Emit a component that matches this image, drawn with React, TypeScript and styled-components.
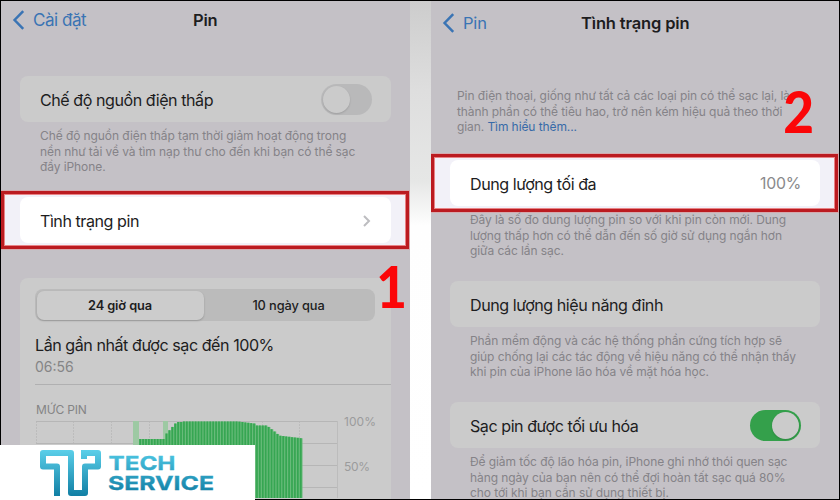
import React from "react";
import styled, { createGlobalStyle } from "styled-components";

const Global = createGlobalStyle`
  *, *::before, *::after { box-sizing: border-box; }
  body { margin: 0; background: #000; font-family: Inter, "Noto Sans", sans-serif; }
`;

const Page = styled.main`
  position: relative;
  width: 840px;
  height: 500px;
  padding: 1px;
  display: grid;
  grid-template-columns: 409px 21px 408px;
  overflow: hidden;
  background: #000;
`;

const Screen = styled.section`
  height: 498px;
  display: flex;
  flex-direction: column;
  overflow: hidden;
  background: #c4c1c6;
`;

const Gutter = styled.div`
  background: linear-gradient(180deg, #cdcdcd 0, #dedede 90px, #e6e7e6 180px, #fefefe 225px, #fff 100%);
`;

const NavBar = styled.header<{ $height: number; $top: number; $cols: string }>`
  display: grid;
  flex: none;
  grid-template-columns: ${(p) => p.$cols};
  align-items: start;
  height: ${(p) => p.$height}px;
  padding-top: ${(p) => p.$top}px;
  svg { display: block; margin: 1px 0 0 11px; }
`;

const Text = styled.span<{ $size: number; $ls?: number; $color?: string; $weight?: number }>`
  display: block;
  white-space: nowrap;
  font-size: ${(p) => p.$size}px;
  line-height: 22px;
  letter-spacing: ${(p) => p.$ls ?? 0}px;
  color: ${(p) => p.$color ?? "#1d1d1e"};
  font-weight: ${(p) => p.$weight ?? 400};
`;

const Label = styled(Text).attrs({ $size: 16.1, $ls: -0.46 })``;

const Card = styled.div<{ $bright?: boolean }>`
  flex: none;
  display: flex;
  align-items: center;
  justify-content: space-between;
  height: 46px;
  margin: 0 19px;
  padding: 1px 19px 0 20px;
  border-radius: 8px;
  background: ${(p) => (p.$bright ? "#fff" : "#cbcbcb")};
`;

const Note = styled.div<{ $top: number; $height: number; $left?: number }>`
  flex: none;
  height: ${(p) => p.$height}px;
  padding: ${(p) => p.$top}px 0 0 ${(p) => p.$left ?? 39}px;
`;

const Line = styled.p`
  margin: 0;
  white-space: nowrap;
  font-size: 12px;
  line-height: 15.6px;
  letter-spacing: -0.085px;
  color: #858388;
`;

const Link = styled.a`
  color: #376aa8;
`;

const Highlight = styled.div`
  flex: none;
  height: 58px;
  margin-right: 1px;
  padding: 3px 0 0;
  border: 3px solid #bb1b20;
  background: #f2f1f8;
  box-shadow: 0 0 0 1px #d5a9ad, inset 0 0 0 1px #e88386;
  ${Card} { margin: 0 15px 0 16px; }
`;

const Toggle = styled.span<{ $on?: boolean }>`
  display: flex;
  justify-content: ${(p) => (p.$on ? "flex-end" : "flex-start")};
  width: 51px;
  height: 31px;
  margin-top: -1px;
  padding: 2px;
  border-radius: 16px;
  background: ${(p) => (p.$on ? "#34a04b" : "#b9b9ba")};
  &::after {
    content: "";
    width: 27px;
    height: 27px;
    border-radius: 50%;
    background: #cbcbcb;
    box-shadow: 0 1px 2px rgba(0, 0, 0, 0.15);
  }
`;

const UsagePanel = styled.div`
  flex: 1;
  margin: 0 19px;
  padding: 11px 0 0 15px;
  border-radius: 8px 8px 0 0;
  background: #cbcbcb;
`;

const Segments = styled.div`
  display: grid;
  grid-template-columns: 167px 1fr;
  width: 340px;
  height: 32px;
  padding: 1.5px;
  border-radius: 8px;
  background: #bbbbbb;
`;

const Segment = styled.span<{ $active?: boolean }>`
  display: grid;
  place-items: center;
  padding-top: 1px;
  border-radius: 7px;
  background: ${(p) => (p.$active ? "#cccccc" : "transparent")};
  box-shadow: ${(p) => (p.$active ? "0 1px 2px rgba(0,0,0,.2)" : "none")};
`;

const LastCharge = styled.div`
  height: 64px;
  padding-top: 13px;
  border-bottom: 1px solid #b0b0b1;
`;

const ChartTitle = styled.div`
  height: 27px;
  padding: 14px 0 0 1px;
`;

const ChartSvg = styled.svg`
  display: block;
`;

const Step = styled.span<{ $x: number; $y: number }>`
  position: absolute;
  left: ${(p) => p.$x}px;
  top: ${(p) => p.$y}px;
  font: 900 57px/56px Lato, sans-serif;
  color: #fb0608;
  transform: scaleX(0.93);
`;

const Watermark = styled.div`
  position: absolute;
  left: 0;
  top: 445px;
  width: 255px;
  height: 55px;
  background: #fff;
  svg { display: block; }
`;

const Back = () => (
  <svg width="14" height="20" viewBox="0 0 14 20" fill="none" stroke="#3a74b4" strokeWidth="2.5">
    <path d="M11.2 1.2 2.6 10l8.6 8.8" />
  </svg>
);

const barTop = (x: number) => {
  if (x < 164) return 18;
  if (x < 175) return 14 - ((x - 164) / 11) * 12.5;
  if (x < 180) return 1;
  if (x < 237) return 0.5;
  if (x < 255) return 0.5 + ((x - 237) / 18) * 2.3;
  if (x < 267) return 4.5;
  if (x < 277) return 5.5 + ((x - 267) / 10) * 8;
  return 14.5 + ((x - 277) / 25) * 3;
};

const Chart = () => {
  const bars: number[] = [];
  for (let x = 139; x < 300; x += 2.92) bars.push(x);
  return (
    <ChartSvg width="355" height="86" viewBox="35 -9 355 86">
      <g stroke="#b6b6b6" strokeWidth="1">
        {[0.5, 22.5, 44.5, 66.5].map((y) => (
          <path key={y} d={`M36 ${y}H337`} />
        ))}
        {[36.5, 73.5, 111.5, 149.5, 187.5, 224.5, 262.5, 299.5, 337.5].map((x) => (
          <path key={x} d={`M${x} 0V80`} strokeDasharray={x === 337.5 ? undefined : "2 1"} opacity=".7" />
        ))}
      </g>
      <path d="M133 0h6v80h-6zM163 0h5v80h-5z" fill="#9dc9a3" />
      <path
        d={`M${bars.map((x) => `${x} ${barTop(x)}H${x + 2.92}`).join("L")}V80H139Z`}
        fill="#68bb7a"
      />
      {bars.map((x) => (
        <rect key={x} x={x + 0.3} y={barTop(x)} width="1.7" height="80" fill="#36a652" />
      ))}
      <g fill="#9b9b9c" fontSize="12">
        <text x="344" y="5" textLength="32">100%</text>
        <text x="344" y="49.5" textLength="26">50%</text>
      </g>
    </ChartSvg>
  );
};

const Logo = () => (
  <svg width="255" height="55" viewBox="0 0 255 55">
    <defs>
      <linearGradient id="mark" x1="0" y1="5" x2="0" y2="51" gradientUnits="userSpaceOnUse">
        <stop stopColor="#5bcfe9" />
        <stop offset="1" stopColor="#117fa4" />
      </linearGradient>
      <linearGradient id="word" x1="0" y1="11" x2="0" y2="45" gradientUnits="userSpaceOnUse">
        <stop stopColor="#48c0dd" />
        <stop offset="1" stopColor="#1785aa" />
      </linearGradient>
    </defs>
    <path
      d="M57 51V21.5H43V8H71V48H85V21.5H98V8H81"
      fill="none"
      stroke="url(#mark)"
      strokeWidth="6"
      strokeLinejoin="round"
    />
    <path d="M81 5h6v9h-6z" fill="url(#mark)" />
    <g fill="url(#word)" stroke="url(#word)" strokeWidth=".3" fontFamily="Inter" fontWeight="700" fontSize="19.2">
      <text x="108.5" y="25.2" textLength="67" lengthAdjust="spacingAndGlyphs">TECH</text>
      <text x="108" y="45" textLength="106" lengthAdjust="spacingAndGlyphs">SERVICE</text>
    </g>
  </svg>
);

export default function App() {
  return (
    <>
      <Global />
      <Page>
        <Screen>
          <NavBar $height={75} $top={8} $cols="32px 160px 1fr">
            <Back />
            <Text $size={17} $ls={-0.45} $color="#3a74b4">Cài đặt</Text>
            <Text $size={16.5} $ls={-0.2} $weight={600}>Pin</Text>
          </NavBar>
          <Card>
            <Label>Chế độ nguồn điện thấp</Label>
            <Toggle />
          </Card>
          <Note $top={6} $height={69}>
            <Line>Chế độ nguồn điện thấp tạm thời giảm hoạt động trong</Line>
            <Line>nền như tải về và tìm nạp thư cho đến khi bạn có thể sạc</Line>
            <Line>đầy iPhone.</Line>
          </Note>
          <Highlight>
            <Card $bright>
              <Label>Tình trạng pin</Label>
              <svg width="10" height="14" viewBox="0 0 10 14" fill="none" stroke="#bdbdc0" strokeWidth="2">
                <path d="m2 2 5 5-5 5" />
              </svg>
            </Card>
          </Highlight>
          <Note $top={0} $height={29} />
          <UsagePanel>
            <Segments>
              <Segment $active><Text $size={12.8} $ls={-0.1} $weight={600}>24 giờ qua</Text></Segment>
              <Segment><Text $size={12.8} $ls={-0.1} $weight={500}>10 ngày qua</Text></Segment>
            </Segments>
            <LastCharge>
              <Label>Lần gần nhất được sạc đến 100%</Label>
              <Text $size={14} $color="#858586">06:56</Text>
            </LastCharge>
            <ChartTitle>
              <Text $size={12} $ls={-0.15} $color="#848485">MỨC PIN</Text>
            </ChartTitle>
            <Chart />
          </UsagePanel>
        </Screen>
        <Gutter />
        <Screen>
          <NavBar $height={86} $top={11} $cols="32px 118px 1fr">
            <Back />
            <Text $size={16.5} $ls={-0.2} $color="#3a74b4">Pin</Text>
            <Text $size={16.5} $ls={-0.15} $weight={600}>Tình trạng pin</Text>
          </NavBar>
          <Note $top={1} $height={67} $left={26}>
            <Line>Pin điện thoại, giống như tất cả các loại pin có thể sạc lại, là</Line>
            <Line>thành phần có thể tiêu hao, trở nên kém hiệu quả theo thời</Line>
            <Line>gian. <Link>Tìm hiểu thêm...</Link></Line>
          </Note>
          <Highlight>
            <Card $bright>
              <Label>Dung lượng tối đa</Label>
              <Text $size={15.8} $ls={-0.2} $color="#89898b">100%</Text>
            </Card>
          </Highlight>
          <Note $top={0} $height={69}>
            <Line>Đây là số đo dung lượng pin so với khi pin còn mới. Dung</Line>
            <Line>lượng thấp hơn có thể dẫn đến số giờ sử dụng ngắn hơn</Line>
            <Line>giữa các lần sạc.</Line>
          </Note>
          <Card><Label>Dung lượng hiệu năng đỉnh</Label></Card>
          <Note $top={6} $height={75}>
            <Line>Phần mềm động và các hệ thống phần cứng tích hợp sẽ</Line>
            <Line>giúp chống lại các tác động về hiệu năng có thể nhận thấy</Line>
            <Line>khi pin của iPhone lão hóa về mặt hóa học.</Line>
          </Note>
          <Card>
            <Label>Sạc pin được tối ưu hóa</Label>
            <Toggle $on />
          </Card>
          <Note $top={6} $height={60}>
            <Line>Để giảm tốc độ lão hóa pin, iPhone ghi nhớ thói quen sạc</Line>
            <Line>hàng ngày của bạn nên có thể đợi hoàn tất sạc quá 80%</Line>
            <Line>cho tới khi bạn cần sử dụng thiết bị.</Line>
          </Note>
        </Screen>
        <Step $x={375} $y={258}>1</Step>
        <Step $x={782} $y={83}>2</Step>
        <Watermark><Logo /></Watermark>
      </Page>
    </>
  );
}
